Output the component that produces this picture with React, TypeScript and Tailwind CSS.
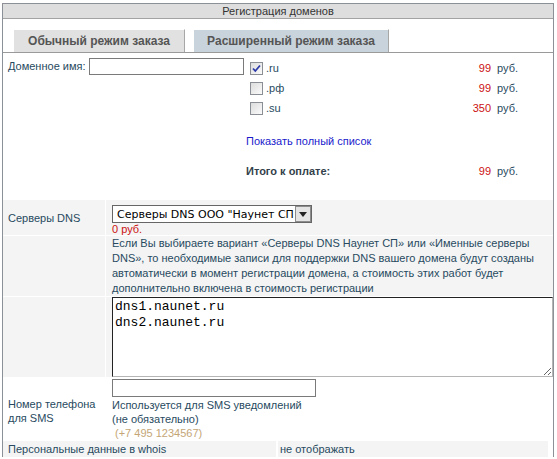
import React from "react";

const zones = [
  { name: ".ru", price: "99", checked: true },
  { name: ".рф", price: "99", checked: false },
  { name: ".su", price: "350", checked: false },
];

function Check({ on }: { on: boolean }) {
  return (
    <span className="relative inline-block w-[13px] h-[13px] border border-[#8a8f96] bg-gradient-to-br from-[#dcdcdc] to-[#fbfbfb]">
      {on && (
        <svg viewBox="0 0 13 13" className="absolute -left-px -top-px w-[13px] h-[13px]">
          <path d="M3 6.5 L5.3 9 L10 3.5" fill="none" stroke="#2b3aa8" strokeWidth="1.8" />
        </svg>
      )}
    </span>
  );
}

export default function App() {
  return (
    <div className="pt-[3px] pl-[2px] text-[11px] leading-[13px] text-[#274a60]" style={{ fontFamily: '"Liberation Sans", Arial, sans-serif' }}>
      <div className="w-[552px] border-x border-t border-[#8b9197] bg-white">
        {/* ── HEADER ── */}
        <div className="h-[15px] bg-[#dedede] border-b border-[#a3a3a3] text-center text-[#333] leading-[14px]">
          Регистрация доменов
        </div>

        {/* ── TABS ── */}
        <div className="pt-[10px] pl-[10px] flex items-end gap-[8px] border-b border-[#9a9a9a]">
          <div className="w-[172px] h-[23px] bg-[#e1e1e1] border-t border-l border-white border-r border-r-[#a7a7a7] text-[12px] font-bold text-[#555] flex items-center justify-center">
            Обычный режим заказа
          </div>
          <div className="w-[196px] h-[23px] bg-[#c9d3dc] border-t border-l border-white border-r border-r-[#a7a7a7] text-[12px] font-bold text-[#555] flex items-center justify-center">
            Расширенный режим заказа
          </div>
        </div>

        {/* ── DOMAIN NAME ── */}
        <div className="flex h-[147px] pt-[5px]">
          <div className="pl-[5px] w-[86px] h-[17px] flex items-center">Доменное имя:</div>
          <input className="w-[155px] h-[17px] border border-[#7a7a7a] outline-none bg-white" />
          <div className="ml-[2px] w-[272px]">
            {zones.map(z => (
              <div key={z.name} className="h-[20px] flex items-center">
                <div className="w-[150px] flex items-center pl-[4px] gap-[3px]">
                  <Check on={z.checked} />
                  <span>{z.name}</span>
                </div>
                <span className="w-[96px] text-right text-[#cc1111]">{z.price}</span>
                <span className="pl-[6px]">руб.</span>
              </div>
            ))}
            <div className="mt-[17px] h-[14px] text-[#1a1acc]">Показать полный список</div>
            <div className="mt-[16px] flex items-center">
              <span className="w-[150px] font-bold text-[#333f4a]">Итого к оплате:</span>
              <span className="w-[96px] text-right text-[#cc1111]">99</span>
              <span className="pl-[6px]">руб.</span>
            </div>
          </div>
        </div>

        {/* ── DNS SERVERS ── */}
        <div className="flex flex-col gap-px">
          <div className="flex gap-px">
            <div className="w-[102px] h-[35px] bg-[#f4f4f4] pl-[5px] pt-[12px]">Серверы DNS</div>
            <div className="flex-1 bg-[#f4f4f4] pl-[6px] pt-[5px]">
              <div className="w-[200px] h-[18px] border border-[#666] bg-white flex items-center">
                <span className="flex-1 pl-[4px] text-[11px] text-black whitespace-nowrap overflow-hidden" style={{ fontFamily: '"DejaVu Sans", Verdana, sans-serif' }}>
                  Серверы DNS ООО "Наунет СП
                </span>
                <span className="w-[16px] h-[16px] bg-[#e4e4e4] border border-[#8c8c8c] flex items-center justify-center">
                  <svg viewBox="0 0 8 5" className="w-[8px] h-[5px]">
                    <path d="M0 0 H8 L4 5 Z" fill="#222" />
                  </svg>
                </span>
              </div>
              <div className="text-[#cc1111] leading-[12px]">0 руб.</div>
            </div>
          </div>

          <div className="flex gap-px">
            <div className="w-[102px] h-[60px] bg-[#f4f4f4]" />
            <div className="flex-1 bg-[#f4f4f4] pl-[6px] leading-[15px]">
              Если Вы выбираете вариант «Серверы DNS Наунет СП» или «Именные серверы DNS», то необходимые записи для поддержки DNS вашего домена будут созданы автоматически в момент регистрации домена, а стоимость этих работ будет дополнительно включена в стоимость регистрации
            </div>
          </div>

          <div className="flex gap-px">
            <div className="w-[102px] h-[80px] bg-[#f4f4f4]" />
            <div className="flex-1 bg-[#f4f4f4] pl-[6px]">
              <textarea
                className="w-full h-[80px] block border border-t-[#222] border-l-[#222] border-r-[#b5b5b5] border-b-[#b5b5b5] bg-white text-[13px] leading-[16px] text-black px-[2px] pt-[1px] outline-none"
                style={{ fontFamily: '"Liberation Mono", "Courier New", monospace' }}
                defaultValue={"dns1.naunet.ru\ndns2.naunet.ru"}
              />
            </div>
          </div>
        </div>

        {/* ── PHONE ── */}
        <div className="flex h-[64px] pt-[2px]">
          <div className="w-[103px] pl-[5px] pt-[18px] leading-[14px]">
            Номер телефона<br />для SMS
          </div>
          <div className="pl-[6px] leading-[14px]">
            <input className="w-[204px] h-[18px] border border-[#7a7a7a] outline-none bg-white block mb-px" />
            <div>Используется для SMS уведомлений</div>
            <div>(не обязательно)</div>
            <div className="text-[#c4a676] pl-[3px]">(+7 495 1234567)</div>
          </div>
        </div>

        {/* ── WHOIS ── */}
        <div className="flex gap-[2px] h-[16px] pr-[5px]">
          <div className="w-[273px] bg-[#f4f4f4] pl-[5px] flex items-center">Персональные данные в whois</div>
          <div className="flex-1 bg-[#f4f4f4] pl-[2px] flex items-center">не отображать</div>
        </div>
      </div>
    </div>
  );
}
